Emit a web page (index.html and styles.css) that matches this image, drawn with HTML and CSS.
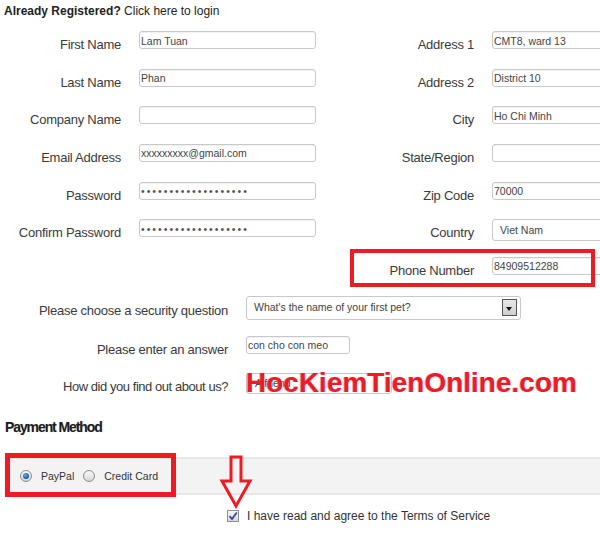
FILE: index.html
```html
<!DOCTYPE html>
<html lang="en">
<head>
    <meta charset="UTF-8">
    <meta name="viewport" content="width=device-width, initial-scale=1.0">
    <title>Register</title>
    <link rel="stylesheet" href="styles.css">
</head>
<body>

<div class="page">
    <p class="login-line"><b>Already Registered?</b> Click here to login</p>

    <div class="account-grid">
        <label>First Name</label>
        <input class="field" type="text" value="Lam Tuan">
        <label>Address 1</label>
        <input class="field" type="text" value="CMT8, ward 13">

        <label>Last Name</label>
        <input class="field" type="text" value="Phan">
        <label>Address 2</label>
        <input class="field" type="text" value="District 10">

        <label>Company Name</label>
        <input class="field" type="text" value="">
        <label>City</label>
        <input class="field" type="text" value="Ho Chi Minh">

        <label>Email Address</label>
        <input class="field" type="text" value="xxxxxxxxx@gmail.com">
        <label>State/Region</label>
        <input class="field" type="text" value="">

        <label>Password</label>
        <input class="field secret" type="password" value="secretpassword12345">
        <label>Zip Code</label>
        <input class="field" type="text" value="70000">

        <label>Confirm Password</label>
        <input class="field secret" type="password" value="secretpassword12345">
        <label>Country</label>
        <div class="dropdown country">Viet Nam</div>

        <span></span>
        <span></span>
        <label>Phone Number</label>
        <input class="field" type="text" value="84909512288">
    </div>

    <div class="extra-grid">
        <label class="first">Please choose a security question</label>
        <div class="dropdown question">
            <span>What's the name of your first pet?</span>
            <span class="drop-btn"></span>
        </div>

        <label>Please enter an answer</label>
        <input class="field answer" type="text" value="con cho con meo">

        <label class="last">How did you find out about us?</label>
        <div class="found-us">
            <div class="dropdown source">A friend</div>
            <div class="watermark">HocKiemTienOnline.com</div>
        </div>
    </div>

    <h3 class="pay-title">Payment Method</h3>

    <div class="pay-bar">
        <span class="radio checked"></span>
        <span class="radio-text">PayPal</span>
        <span class="radio"></span>
        <span class="radio-text">Credit Card</span>
        <div class="mark pay-mark"></div>
    </div>

    <div class="terms">
        <span class="checkbox">
            <svg width="10" height="10" viewBox="0 0 10 10"><path d="M1.5 5.2 L4 8 L8.8 1.5" fill="none" stroke="#34489a" stroke-width="1.8"/></svg>
        </span>
        <span>I have read and agree to the Terms of Service</span>
    </div>

    <div class="mark phone-mark"></div>
    <svg class="arrow" width="34" height="54" viewBox="0 0 34 54">
        <path d="M12 2 L22 2 L22 26 L31 26 L17 51 L3 26 L12 26 Z" fill="none" stroke="#ed1c24" stroke-width="3" stroke-linejoin="miter"/>
    </svg>
</div>

</body>
</html>
```

FILE: styles.css
```css
/* Global Styles */
body {
    margin: 0;
    padding: 0;
    background: #fff;
    font-family: 'Liberation Sans', Arial, sans-serif;
    color: #333;
    overflow: hidden;
}

.page {
    position: relative;
    width: 600px;
    height: 536px;
    overflow: hidden;
}

.login-line {
    margin: 4px 0 0 4px;
    font-size: 12px;
    line-height: 15px;
    color: #222;
}

/* Account fields */
.account-grid {
    display: grid;
    grid-template-columns: 121px 177px 140px 140px;
    grid-auto-rows: 37.67px;
    column-gap: 18px;
    margin-top: 12px;
}

.account-grid label,
.extra-grid label {
    text-align: right;
    font-size: 13px;
    letter-spacing: -0.25px;
    line-height: 15px;
    padding-top: 6px;
    color: #3a3a3a;
    white-space: nowrap;
}

.field {
    box-sizing: border-box;
    width: 100%;
    height: 18px;
    margin: 0;
    padding: 1px 1px 0;
    border: 1px solid #c9c9c9;
    border-radius: 3px;
    box-shadow: inset 0 1px 1px rgba(0, 0, 0, 0.06);
    font-family: 'Liberation Sans', Arial, sans-serif;
    font-size: 10.5px;
    color: #444;
    background: #fff;
    outline: none;
}

.secret {
    letter-spacing: 2px;
    color: #555;
}

.dropdown {
    box-sizing: border-box;
    border: 1px solid #c9c9c9;
    border-radius: 3px;
    background: #fff;
    font-size: 10.5px;
    color: #444;
}

.country {
    height: 22px;
    line-height: 20px;
    padding-left: 7px;
}

/* Security and source */
.extra-grid {
    display: grid;
    grid-template-columns: 228px 1fr;
    grid-template-rows: 40px 37px 38px;
    column-gap: 18px;
    margin-top: 1.3px;
}

.extra-grid label.first {
    padding-top: 7px;
}

.extra-grid label.last {
    letter-spacing: -0.45px;
}

.question {
    display: flex;
    align-items: center;
    justify-content: space-between;
    width: 275px;
    height: 24px;
    padding: 0 3px 0 7px;
    font-size: 10.5px;
}

.question span:first-child {
    margin-top: -2px;
}

.drop-btn {
    position: relative;
    box-sizing: border-box;
    width: 15px;
    height: 17px;
    border: 1px solid #555;
    background: linear-gradient(#e8e8e8, #cfcfcf);
}

.drop-btn::after {
    content: '';
    position: absolute;
    left: 3px;
    top: 7px;
    border-left: 3.5px solid transparent;
    border-right: 3.5px solid transparent;
    border-top: 4px solid #111;
}

.answer {
    width: 104px;
}

.found-us {
    position: relative;
}

.source {
    width: 146px;
    height: 21px;
    line-height: 19px;
    padding-left: 8px;
}

.watermark {
    position: absolute;
    left: 0;
    top: -4px;
    font-size: 28px;
    line-height: 28px;
    font-weight: bold;
    color: #ed1c24;
    white-space: nowrap;
    text-shadow: -1px 0 0 rgba(240, 110, 160, 0.6);
}

/* Payment */
.pay-title {
    margin: 8px 0 0 5px;
    font-size: 14px;
    line-height: 16px;
    letter-spacing: -1.1px;
    color: #1e1e1e;
    text-shadow: 0 0 1px rgba(0, 0, 0, 0.25);
}

.pay-bar {
    position: relative;
    display: flex;
    align-items: center;
    box-sizing: border-box;
    height: 38px;
    margin: 22px 0 0 4px;
    padding-left: 16px;
    background: #f3f3f3;
    border-top: 2px solid #e7e7e7;
    border-bottom: 2px solid #e7e7e7;
    font-size: 10.5px;
    color: #333;
}

.radio {
    position: relative;
    box-sizing: border-box;
    width: 12px;
    height: 12px;
    border: 1px solid #8c8c8c;
    border-radius: 50%;
    background: linear-gradient(#fafafa, #d6d6d6);
}

.radio.checked::after {
    content: '';
    position: absolute;
    left: 2px;
    top: 2px;
    width: 6px;
    height: 6px;
    border-radius: 50%;
    background: radial-gradient(circle at 40% 35%, #5fb0e8, #0a5a98 70%);
}

.radio-text {
    margin: 0 9px 0 9px;
}

.mark {
    position: absolute;
    box-sizing: border-box;
    border: 5px solid #ed1c24;
}

.pay-mark {
    left: 1px;
    top: -6px;
    width: 171px;
    height: 44px;
}

.phone-mark {
    left: 350px;
    top: 249px;
    width: 245px;
    height: 38px;
    border-width: 4px;
}

.arrow {
    position: absolute;
    left: 219px;
    top: 455px;
}

.terms {
    display: flex;
    align-items: center;
    height: 14px;
    margin: 14px 0 0 227px;
    font-size: 12px;
    line-height: 14px;
    color: #333;
}

.checkbox {
    display: flex;
    align-items: center;
    justify-content: center;
    box-sizing: border-box;
    width: 12px;
    height: 12px;
    margin-right: 8px;
    border: 1px solid #8f8f8f;
    background: linear-gradient(#f6f6f6, #d9d9d9);
}
```
